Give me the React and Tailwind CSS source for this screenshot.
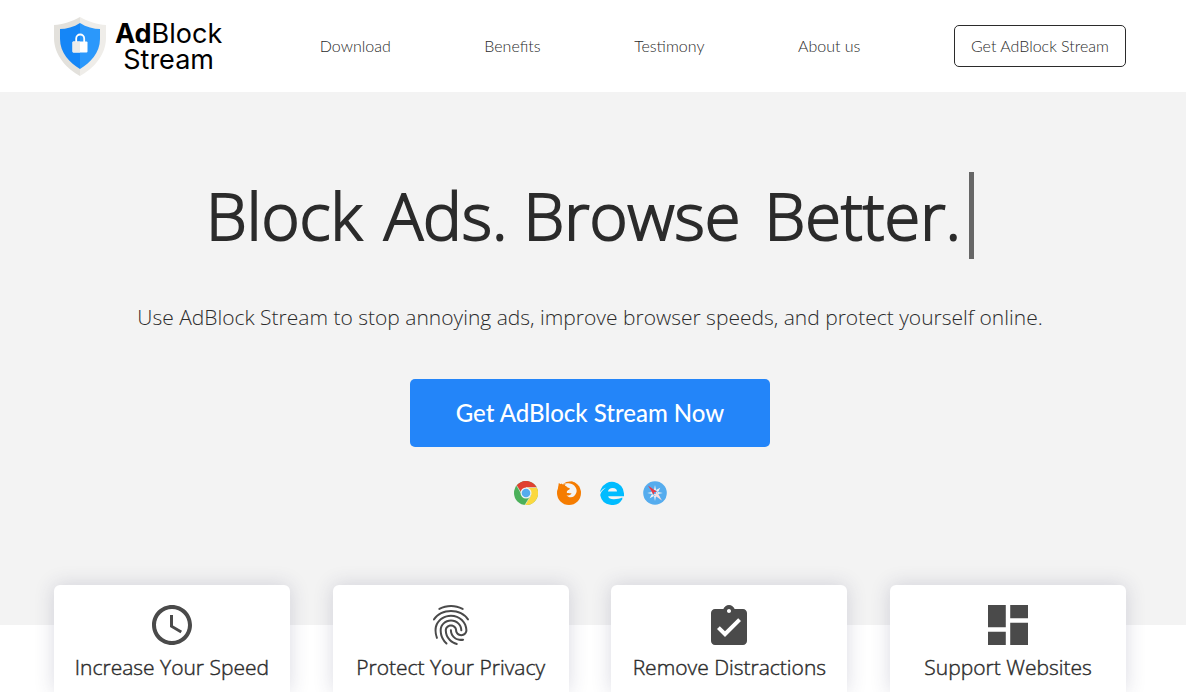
import React from 'react';
import { MdAccessTime, MdFingerprint, MdAssignmentTurnedIn, MdDashboard } from 'react-icons/md';

const navItems = ['Download', 'Benefits', 'Testimony', 'About us'];

const features = [
  { title: 'Increase Your Speed', Icon: MdAccessTime, viewBox: '2 2 20 20' },
  { title: 'Protect Your Privacy', Icon: MdFingerprint, viewBox: '2 2 20 20' },
  { title: 'Remove Distractions', Icon: MdAssignmentTurnedIn, viewBox: '3 1 18 20' },
  { title: 'Support Websites', Icon: MdDashboard, viewBox: '3 3 18 18' },
];

function Shield() {
  return (
    <svg viewBox="0 0 54 60" className="h-15 w-[54px]" aria-hidden="true">
      <path d="M27 1C20 5 9 9 1 9V22C1 39 14 53 27 60Z" fill="#e3e1dc" />
      <path d="M27 1C34 5 45 9 53 9V22C53 39 40 53 27 60Z" fill="#efede9" />
      <path d="M27 7C21 11 13 13 7 13V23C7 37 17 47 27 53Z" fill="#1586f7" />
      <path d="M27 7C33 11 41 13 47 13V23C47 37 37 47 27 53Z" fill="#2b98fb" />
      <path d="M23.200 27V22.500A4 4 0 0 1 31.200 22.500V27" fill="none" stroke="#fff" strokeWidth="1.800" />
      <rect x="19.500" y="25.500" width="15" height="11" rx="1" fill="#fff" />
      <path d="M20.500 25.500H27V36.500H20.500A1 1 0 0 1 19.500 35.500V26.500A1 1 0 0 1 20.500 25.500Z" fill="#ecebea" />
    </svg>
  );
}

function Chrome() {
  return (
    <svg viewBox="0 0 24 24" className="size-6" role="img" aria-label="Chrome">
      <circle cx="12" cy="12" r="12" fill="#4bb05a" />
      <path d="M12 6.500H22.700A12 12 0 0 1 11 24L17 14.500Z" fill="#fbd83f" />
      <path d="M2.600 4.500A12 12 0 0 1 22.700 6.500H12L7 11Z" fill="#e04030" />
      <path d="M2.600 4.500L7 12M22.700 6.500H12M11 24L16.500 15" stroke="#f3f3f3" strokeWidth=".6" />
      <circle cx="12" cy="12" r="5.500" fill="#f3f3f3" />
      <circle cx="12" cy="12" r="4.300" fill="#55acee" />
    </svg>
  );
}

function Firefox() {
  return (
    <svg viewBox="0 0 24 24" className="size-6" role="img" aria-label="Firefox">
      <circle cx="12" cy="12" r="12" fill="#f57c00" />
      <path d="M5 0H12C15.500 .8 19 2.800 19.800 6C20.500 9 19.500 13 17 15.200C14.500 17 11 16.300 9.500 14.200C12 14.800 14 14 14.500 12.300C12.800 12.200 12 11.700 10 12C9.300 10.800 10.200 9.500 12.300 8.600C12.900 8.200 13 7.400 12.200 7C10.800 6.800 9.600 6.200 9.200 5C7.500 5 6 4.400 5 3Z" fill="#f3f3f3" />
      <path d="M1 7.500L1.800 2L4.600 3.800C6 3.200 7.400 3.200 8.600 3.400C7.600 5 8 6.500 8.500 7.500L3 9ZM6 2.900A12 12 0 0 1 18 1.800C21.500 4.500 22.500 9 20 12C20 7 18 3.600 13 2.400C10.500 1.900 8 2.200 6 2.900Z" fill="#f57c00" />
    </svg>
  );
}

function Edge() {
  return (
    <svg viewBox="0 0 24 24" className="size-6" role="img" aria-label="Edge">
      <path
        fill="#00bcff"
        d="M1 8A12 12 0 0 1 24 12.500V15.200H8.200C8.600 17.600 11 18.300 14 18.200C17 18.200 20 17.600 22.300 16.600V18.200A12 12 0 0 1 .3 14.500C.3 12 2.800 8.600 6.500 6.600C3.800 7.400 1.500 9.200 0 11.200C.2 10 .5 9 1 8ZM8 10.600H17C17 8.300 15.500 7 12.700 7C10 7 8.300 8.300 8 10.600Z"
        fillRule="evenodd"
      />
    </svg>
  );
}

function Safari() {
  return (
    <svg viewBox="0 0 24 24" className="size-6" role="img" aria-label="Safari">
      <circle cx="12" cy="12" r="11.800" fill="#55acee" />
      <path d="M12 4L13 9L17.300 6.700L15 11L19.800 12L15 13L17.300 17.300L13 15L12 20L11 15L6.700 17.300L9 13L4.200 12L9 11L6.700 6.700L11 9Z" fill="#f3f3f3" />
      <circle cx="12" cy="12" r="2.700" fill="#55acee" />
      <path d="M5 4.500L13.600 10.400L10.400 13.600Z" fill="#e63946" />
      <path d="M19 19.500L13.600 10.400L10.400 13.600Z" fill="#fbdcdc" />
      <circle cx="12" cy="12" r="1.100" fill="#55acee" />
    </svg>
  );
}

export default function App() {
  return (
    <div className="bg-white font-['Open_Sans',sans-serif] text-[#2b2b2b]">
      <header className="flex h-23 items-center justify-between pr-15 pl-[53px] font-['Lato',sans-serif]">
        <a href="#home" className="flex items-center gap-2 pr-1">
          <Shield />
          <span className="flex flex-col items-center pt-0.5 font-['Inter',sans-serif] text-[27px] leading-[26px] text-black">
            <span>
              <b>Ad</b>Block
            </span>
            <span>Stream</span>
          </span>
        </a>
        {navItems.map((item) => (
          <a key={item} href={'#' + item.toLowerCase().replace(' ', '-')} className="text-base font-light">
            {item}
          </a>
        ))}
        <button type="button" className="h-[42px] rounded-[5px] border border-[#2b2b2b] px-4 text-base font-light">
          Get AdBlock Stream
        </button>
      </header>

      <main>
        <section className="flex flex-col items-center bg-[#f3f3f3] pt-20 pr-1.5 pb-30">
          <h1 className="flex items-center text-[65px] leading-[87px] font-light [-webkit-text-stroke:0.03em]">
            <span className="mr-[22px]">Block</span>
            <span className="mr-4">Ads.</span>
            <span className="mr-6">Browse</span>
            <span>Better.</span>
            <span className="ml-2 h-[87px] w-[5px] bg-[#666]" aria-hidden="true" />
          </h1>
          <p className="mt-10 text-[21px] leading-9 font-light">
            Use AdBlock Stream to stop annoying ads, improve browser speeds, and protect yourself online.
          </p>
          <button
            type="button"
            className="mt-11 h-17 w-90 rounded-[5px] bg-[#2385f9] font-['Lato',sans-serif] text-2xl font-medium text-white"
          >
            Get AdBlock Stream Now
          </button>
          <div className="mt-[34px] flex gap-[19px]">
            <Chrome />
            <Firefox />
            <Edge />
            <Safari />
          </div>
        </section>

        <section className="relative -mt-10 flex h-[107px] justify-between pr-15 pl-[54px]">
          {features.map(({ title, Icon, viewBox }) => (
            <article
              key={title}
              className="flex w-[22%] flex-col items-center rounded-t-md bg-white pt-5 shadow-[0_0_20px_rgba(50,50,93,0.18)]"
            >
              <Icon viewBox={viewBox} className="size-10 text-[#4a4a4a]" aria-hidden="true" />
              <h2 className="mt-2 text-[21px] leading-7 font-light whitespace-nowrap [-webkit-text-stroke:0.02em]">
                {title}
              </h2>
            </article>
          ))}
        </section>
      </main>
    </div>
  );
}
